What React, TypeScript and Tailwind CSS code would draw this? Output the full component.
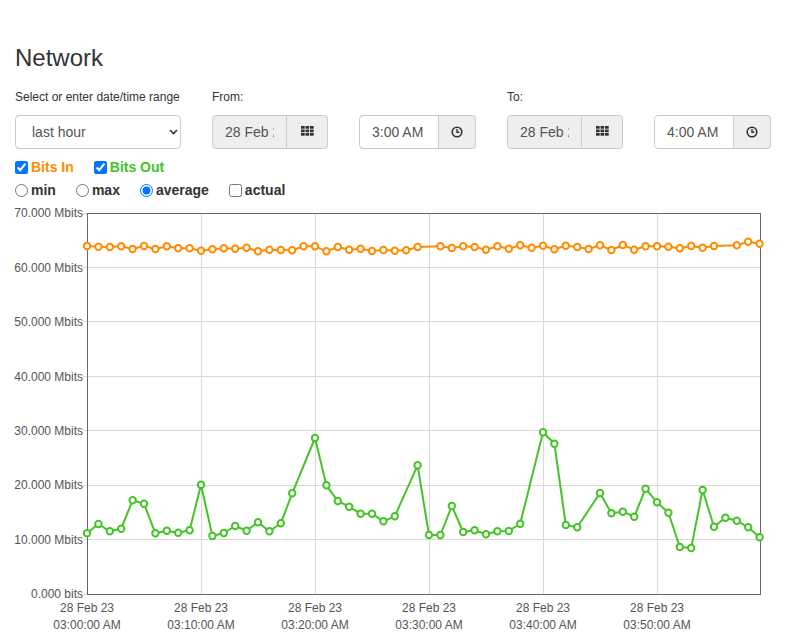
import React from "react";

const font = "font-['Liberation_Sans',Arial,sans-serif]";

// pixel positions read off the chart; null = no sample for that minute
const bitsOut: (number | null)[] = [
  533.3, 524, 531.3, 528.7, 500.3, 503.7, 533.3, 530.7, 532.7, 530.3,
  484.7, 536, 533, 526, 530.7, 522.3, 531.3, 523.3, 493.3, null,
  438, 485.3, 501, 506.7, 513.7, 513.7, 521.3, 516.3, null, 465.3,
  535, 535, 506, 532, 530.3, 534.3, 531.3, 531, 523.7, null,
  432.3, 443.7, 525, 527.3, null, 493, 513.3, 511.7, 516.7, 488.7,
  502.3, 512.7, 547, 548, 490, 526.7, 517.7, 520.7, 527.3, 537.3,
];

const bitsIn: (number | null)[] = [
  246, 246.7, 247, 246.3, 249, 246, 249, 246.3, 248.3, 248.3,
  250.7, 249.3, 248.3, 248.7, 247.7, 251.3, 249.7, 250, 250.3, 246.3,
  246.3, 251.3, 247, 249.7, 248.7, 251, 250, 250.7, 250.3, 247,
  null, 246.3, 248, 246.3, 247, 249.7, 246.3, 248.7, 245.3, 247.7,
  245.7, 249.3, 245.7, 247, 249, 245.3, 250, 245, 249.7, 246.3,
  246.3, 246.7, 248.3, 246, 247.7, 246, null, 245.3, 241.7, 243.7,
];

const X0 = 87;
const X1 = 760;
const Y0 = 213;
const Y1 = 594;
const STEP = 11.4;

const yTicks = [
  "70.000 Mbits",
  "60.000 Mbits",
  "50.000 Mbits",
  "40.000 Mbits",
  "30.000 Mbits",
  "20.000 Mbits",
  "10.000 Mbits",
  "0.000 bits",
];

const xTicks = ["03:00:00 AM", "03:10:00 AM", "03:20:00 AM", "03:30:00 AM", "03:40:00 AM", "03:50:00 AM"];

function Series({ data, color }: { data: (number | null)[]; color: string }) {
  const pts = data
    .map((y, i) => (y === null ? null : [X0 + i * STEP, y]))
    .filter((p): p is number[] => p !== null);
  return (
    <g>
      <polyline
        points={pts.map((p) => p.join(",")).join(" ")}
        fill="none"
        stroke={color}
        strokeWidth={2}
        strokeLinejoin="round"
      />
      {pts.map((p, i) => (
        <circle key={i} cx={p[0]} cy={p[1]} r={3.2} fill="#fff" stroke={color} strokeWidth={2} />
      ))}
    </g>
  );
}

function Chart() {
  const rowH = (Y1 - Y0) / 7;
  return (
    <svg width={787} height={434} viewBox="0 200 787 434" className="block">
      <g shapeRendering="crispEdges">
        {yTicks.map((_, k) => (
          <line key={k} x1={X0 - 4} x2={X1} y1={Y0 + k * rowH} y2={Y0 + k * rowH} stroke="#d9d9d9" />
        ))}
        {xTicks.map((_, k) => (
          <line key={k} x1={X0 + k * 114} x2={X0 + k * 114} y1={Y0} y2={Y1} stroke="#d9d9d9" />
        ))}
        <rect x={X0} y={Y0} width={X1 - X0} height={Y1 - Y0} fill="none" stroke="#666" />
      </g>
      <g fontFamily="'Liberation Sans', Arial, sans-serif" fontSize={12} fill="#555">
        {yTicks.map((t, k) => (
          <text key={t} x={83} y={Y0 + k * rowH + 4.3} textAnchor="end">
            {t}
          </text>
        ))}
        {xTicks.map((t, k) => (
          <g key={t}>
            <text x={X0 + k * 114} y={611.5} textAnchor="middle">
              28 Feb 23
            </text>
            <text x={X0 + k * 114} y={628.5} textAnchor="middle">
              {t}
            </text>
          </g>
        ))}
      </g>
      <Series data={bitsIn} color="#ff8c00" />
      <Series data={bitsOut} color="#44c426" />
    </svg>
  );
}

function GridIcon() {
  return (
    <svg width="13" height="10" viewBox="0 0 13 10" fill="#333">
      {[0, 1, 2].map((r) =>
        [0, 1, 2].map((c) => <rect key={`${r}${c}`} x={c * 4.5} y={r * 3.5} width={3.7} height={2.7} />)
      )}
    </svg>
  );
}

function ClockIcon() {
  return (
    <svg width="12" height="12" viewBox="0 0 12 12" fill="none" stroke="#333">
      <circle cx="6" cy="6" r="4.8" strokeWidth="1.6" />
      <path d="M6 3v3.2h2.4" strokeWidth="1.4" />
    </svg>
  );
}

function DateGroup() {
  return (
    <div className="flex h-[34px]">
      <input
        readOnly
        value="28 Feb 2023"
        className="w-[75px] min-w-0 rounded-l-[4px] border border-[#ccc] bg-[#eee] px-3 text-[14px] text-[#555] outline-none"
      />
      <button className="flex w-[41px] items-center justify-center rounded-r-[4px] border border-l-0 border-[#ccc] bg-[#eee] pb-[2px]">
        <GridIcon />
      </button>
    </div>
  );
}

function TimeGroup({ value }: { value: string }) {
  return (
    <div className="flex h-[34px]">
      <input
        readOnly
        value={value}
        className="w-[80px] min-w-0 rounded-l-[4px] border border-[#ccc] bg-white px-3 text-[14px] text-[#555] outline-none"
      />
      <button className="flex w-[37px] items-center justify-center rounded-r-[4px] border border-l-0 border-[#ccc] bg-[#eee]">
        <ClockIcon />
      </button>
    </div>
  );
}

export default function App(): JSX.Element {
  return (
    <div className={`${font} w-[787px] text-[#333]`}>
      <div className="px-[15px]">
        <h1 className="pt-[45px] text-[24px] font-normal leading-[26px]">Network</h1>
        <div className="mt-[18px] grid grid-cols-[166px_116px_117px_116px_117px] gap-x-[31px] gap-y-[9px] text-[12px] leading-[17px]">
          <label>Select or enter date/time range</label>
          <label>From:</label>
          <div></div>
          <label>To:</label>
          <div></div>
          <div className="relative h-[34px]">
            <select className="h-full w-full appearance-none rounded-[4px] border border-[#ccc] bg-white pl-[16px] text-[14px] text-[#555] outline-none">
              <option>last hour</option>
            </select>
            <svg
              className="pointer-events-none absolute right-[3px] top-[14px]"
              width="9"
              height="6"
              viewBox="0 0 9 6"
              fill="none"
              stroke="#333"
              strokeWidth="1.6"
            >
              <path d="M1 1l3.5 3.5L8 1" />
            </svg>
          </div>
          <DateGroup />
          <TimeGroup value="3:00 AM" />
          <DateGroup />
          <TimeGroup value="4:00 AM" />
        </div>
        <div className="mt-[8px] flex h-[20px] items-center gap-[20px] text-[14px] font-bold">
          <label className="flex items-center gap-[3px] text-[#ff8c00]">
            <input type="checkbox" defaultChecked className="m-0 h-[13px] w-[13px]" />
            Bits In
          </label>
          <label className="flex items-center gap-[3px] text-[#44c426]">
            <input type="checkbox" defaultChecked className="m-0 h-[13px] w-[13px]" />
            Bits Out
          </label>
        </div>
        <div className="mt-[3px] flex h-[20px] items-center gap-[20px] text-[14px] font-bold">
          <label className="flex items-center gap-[3px]">
            <input type="radio" name="agg" className="m-0 h-[13px] w-[13px]" />
            min
          </label>
          <label className="flex items-center gap-[3px]">
            <input type="radio" name="agg" className="m-0 h-[13px] w-[13px]" />
            max
          </label>
          <label className="flex items-center gap-[3px]">
            <input type="radio" name="agg" defaultChecked className="m-0 h-[13px] w-[13px]" />
            average
          </label>
          <label className="flex items-center gap-[3px]">
            <input type="checkbox" className="m-0 h-[13px] w-[13px]" />
            actual
          </label>
        </div>
      </div>
      <Chart />
    </div>
  );
}
